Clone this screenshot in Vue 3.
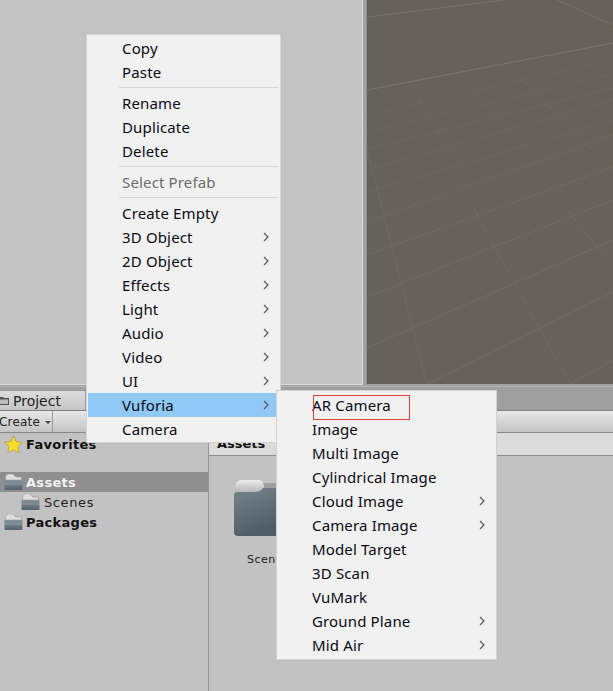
<template>
  <div class="editor">
    <div class="top">
      <div class="hierarchy"></div>
      <div class="scene">
        <svg class="grid" viewBox="367 0 246 384" preserveAspectRatio="none">
          <line v-for="(l, i) in gridLines" :key="i" :x1="l[0]" :y1="l[1]" :x2="l[2]" :y2="l[3]" :stroke-opacity="l[4]" stroke="#9a9690" stroke-width="1" />
        </svg>
      </div>
    </div>

    <div class="bottom">
      <div class="tabbar">
        <div class="tab">
          <svg class="tab-icon" viewBox="0 0 10 10"><path d="M-2 1h5l1 1h5v7h-11z" fill="#555" /><path d="M-1 3.5h9v4.5h-9z" fill="#bdbdbd" /></svg>
          <span>Project</span>
        </div>
      </div>
      <div class="toolbar">
        <div class="create">Create <i class="caret"></i></div>
      </div>
      <div class="panes">
        <div class="tree">
          <div class="row bold fav">
            <svg class="star" viewBox="0 0 20 20"><path d="M10 .8l2.8 6 6.6.8-4.8 4.5 1.3 6.6L10 15.5l-5.9 3.2 1.3-6.6L.6 7.6l6.6-.8z" fill="#f8dc2c" stroke="#b09c50" stroke-width="0.8" /></svg>
            <span>Favorites</span>
          </div>
          <div class="row bold selected">
            <svg class="mini"><use href="#mini-folder" /></svg>
            <span>Assets</span>
          </div>
          <div class="row child">
            <svg class="mini"><use href="#mini-folder" /></svg>
            <span>Scenes</span>
          </div>
          <div class="row bold">
            <svg class="mini"><use href="#mini-folder" /></svg>
            <span>Packages</span>
          </div>
        </div>
        <div class="files">
          <div class="crumb"><span>Assets</span></div>
          <div class="file">
            <svg class="big-folder" viewBox="0 0 42 56">
              <defs>
                <linearGradient id="tabfill" x1="0" y1="0" x2="0" y2="1"><stop offset="0" stop-color="#ececec" /><stop offset="1" stop-color="#b4b4b4" /></linearGradient>
                <linearGradient id="bodyfill" x1="0" y1="0" x2="0.3" y2="1"><stop offset="0" stop-color="#76858d" /><stop offset="1" stop-color="#4f5e66" /></linearGradient>
              </defs>
              <path d="M27 3h15v6H27z" fill="#a0a0a0" />
              <path d="M1 9q0-9 7-9h17q4 0 5 6v7H1z" fill="url(#tabfill)" />
              <path d="M0 15q0-3 3-3h18q5 0 8-4h13v48H4q-4 0-4-4z" fill="url(#bodyfill)" />
            </svg>
            <div class="file-name">Scenes</div>
          </div>
        </div>
      </div>
    </div>

    <svg width="0" height="0" class="defs">
      <defs>
        <linearGradient id="minibody" x1="0" y1="0" x2="0" y2="1"><stop offset="0" stop-color="#84929a" /><stop offset="1" stop-color="#55636a" /></linearGradient>
      </defs>
      <symbol id="mini-folder" viewBox="0 0 18 16">
        <path d="M1 5q0-5 3-5h4q2 0 3 3h6v3H1z" fill="#dedede" stroke="#8a8a8a" stroke-width="0.5" />
        <path d="M0 6h18v9q0 1-1 1H1q-1 0-1-1z" fill="url(#minibody)" />
        <path d="M0 9.5h18v1H0z" fill="#b4bec2" opacity="0.5" />
      </symbol>
    </svg>

    <ul class="menu main-menu">
      <template v-for="(item, i) in mainMenu" :key="i">
        <li v-if="item.sep" class="sep"></li>
        <li v-else class="item" :class="{ disabled: item.disabled, active: item.active }">
          <span>{{ item.label }}</span>
          <svg v-if="item.sub" class="arrow" viewBox="0 0 6 10"><path d="M1 1l4 4-4 4" fill="none" stroke="#555" stroke-width="1.1" /></svg>
        </li>
      </template>
    </ul>

    <ul class="menu sub-menu">
      <li v-for="item in vuforiaMenu" :key="item.label" class="item">
        <span>{{ item.label }}</span>
        <svg v-if="item.sub" class="arrow" viewBox="0 0 6 10"><path d="M1 1l4 4-4 4" fill="none" stroke="#555" stroke-width="1.1" /></svg>
      </li>
    </ul>
    <div class="red-box"></div>
  </div>
</template>

<script setup>
const mainMenu = [
  { label: 'Copy' },
  { label: 'Paste' },
  { sep: true },
  { label: 'Rename' },
  { label: 'Duplicate' },
  { label: 'Delete' },
  { sep: true },
  { label: 'Select Prefab', disabled: true },
  { sep: true },
  { label: 'Create Empty' },
  { label: '3D Object', sub: true },
  { label: '2D Object', sub: true },
  { label: 'Effects', sub: true },
  { label: 'Light', sub: true },
  { label: 'Audio', sub: true },
  { label: 'Video', sub: true },
  { label: 'UI', sub: true },
  { label: 'Vuforia', sub: true, active: true },
  { label: 'Camera' }
]

const vuforiaMenu = [
  { label: 'AR Camera' },
  { label: 'Image' },
  { label: 'Multi Image' },
  { label: 'Cylindrical Image' },
  { label: 'Cloud Image', sub: true },
  { label: 'Camera Image', sub: true },
  { label: 'Model Target' },
  { label: '3D Scan' },
  { label: 'VuMark' },
  { label: 'Ground Plane', sub: true },
  { label: 'Mid Air', sub: true }
]

// scene grid, page coordinates
const gridLines = [
  [367, 17, 503, 0, 0.3],
  [367, 90, 613, 43, 0.35],
  [557, 0, 613, 25, 0.3],
  [367, 115, 613, 60, 0.1],
  [367, 132, 613, 74, 0.1],
  [367, 149, 613, 88, 0.12],
  [373, 168, 613, 100, 0.12],
  [368, 192, 613, 120, 0.12],
  [367, 222, 613, 135, 0.15],
  [367, 255, 613, 167, 0.17],
  [367, 297, 613, 200, 0.18],
  [367, 348, 613, 240, 0.2],
  [427, 384, 613, 292, 0.2],
  [570, 384, 613, 360, 0.2],
  [380, 33, 479, 200, 0.1],
  [437, 50, 569, 200, 0.1],
  [500, 57, 613, 170, 0.1],
  [367, 150, 380, 200, 0.14],
  [380, 200, 427, 384, 0.17],
  [469, 200, 570, 384, 0.17],
  [558, 200, 613, 265, 0.17]
]
</script>

<style>
html, body {
  margin: 0;
  background: #c2c2c2;
}
</style>

<style scoped>
.editor {
  position: relative;
  width: 613px;
  height: 691px;
  overflow: hidden;
  display: flex;
  flex-direction: column;
  background: #c2c2c2;
  font-family: "DejaVu Sans", sans-serif;
  color: #111;
}

.defs {
  position: absolute;
}

.top {
  height: 387px;
  display: flex;
  gap: 3px;
  background: #a2a2a2;
  border-bottom: 1px solid #b4b4b4;
  box-sizing: border-box;
}

.hierarchy {
  width: 363px;
  height: 385px;
  box-sizing: border-box;
  background: #c3c3c3;
  border-right: 1px solid #dcdcdc;
  border-bottom: 1px solid #dcdcdc;
}

.scene {
  flex: 1;
  height: 384px;
  background: #68615b;
  border-left: 1px solid #8c8c8c;
}

.grid {
  display: block;
  width: 100%;
  height: 100%;
}

.bottom {
  flex: 1;
  display: flex;
  flex-direction: column;
  min-height: 0;
}

.tabbar {
  height: 24px;
  box-sizing: border-box;
  padding-top: 4px;
  background: #a0a0a0;
  border-bottom: 1px solid #808080;
}

.tab {
  width: 85px;
  height: 19px;
  display: flex;
  align-items: center;
  gap: 3px;
  background: linear-gradient(#dcdcdc, #c6c6c6);
  box-sizing: border-box;
  font-size: 14px;
  color: #222;
}

.tab-icon {
  width: 10px;
  height: 10px;
}

.toolbar {
  height: 22px;
  box-sizing: border-box;
  background: linear-gradient(#e8e8e8, #c4c4c4);
  border-bottom: 1px solid #8a8a8a;
}

.create {
  width: 54px;
  height: 21px;
  box-sizing: border-box;
  margin-left: -1px;
  border-right: 1px solid #9a9a9a;
  font-size: 12px;
  line-height: 23px;
  letter-spacing: 0.2px;
  white-space: nowrap;
  color: #222;
}

.caret {
  display: inline-block;
  margin-left: 1px;
  vertical-align: 2px;
  border-left: 3px solid transparent;
  border-right: 3px solid transparent;
  border-top: 3px solid #444;
}

.panes {
  flex: 1;
  display: flex;
  min-height: 0;
}

.tree {
  width: 209px;
  box-sizing: border-box;
  border-right: 1px solid #959595;
  display: flex;
  flex-direction: column;
}

.row {
  height: 20px;
  display: flex;
  align-items: center;
  gap: 3px;
  padding-left: 4px;
  font-size: 13px;
  color: #222;
  letter-spacing: 0.3px;
}

.row.bold {
  font-weight: 700;
  color: #111;
}

.row.fav {
  height: 22px;
  margin-bottom: 17px;
}

.row.selected {
  background: #8f8f8f;
  color: #f2f2f2;
}

.row.child {
  padding-left: 21px;
  gap: 4px;
  letter-spacing: 0.6px;
}

.star {
  width: 19px;
  height: 19px;
}

.mini {
  width: 19px;
  height: 16px;
}

.files {
  flex: 1;
  display: flex;
  flex-direction: column;
  min-width: 0;
}

.crumb {
  height: 23px;
  box-sizing: border-box;
  padding-left: 8px;
  background: #dcdcdc;
  border-bottom: 1px solid #8e8e8e;
  font-size: 13px;
  font-weight: 700;
  line-height: 22px;
}

.file {
  padding: 24px 0 0 25px;
}

.big-folder {
  display: block;
  width: 42px;
  height: 56px;
}

.file-name {
  margin-top: 17px;
  margin-left: 13px;
  font-size: 11px;
  letter-spacing: 0.5px;
  color: #222;
}

.menu {
  position: absolute;
  margin: 0;
  list-style: none;
  box-sizing: border-box;
  background: #f1f1f1;
  border: 1px solid #d4d4d4;
  box-shadow: 0 0 1px rgba(0, 0, 0, 0.08);
  font-family: "Noto Sans", sans-serif;
  font-size: 15px;
  letter-spacing: 0.15px;
  color: #0a0a14;
}

.main-menu {
  left: 86px;
  top: 34px;
  width: 195px;
  height: 409px;
  padding: 1px;
}

.sub-menu {
  left: 276px;
  top: 390px;
  width: 221px;
  height: 270px;
  padding: 2px;
}

.item {
  position: relative;
  height: 24px;
  line-height: 24px;
  padding-left: 33px;
}

.main-menu .item {
  padding-left: 34px;
}

.item.disabled {
  color: #6d6d6d;
}

.item.active {
  background: #90c8f6;
}

.sep {
  height: 1px;
  margin: 3px 1px 3px 31px;
  background: #d7d7d7;
}

.arrow {
  position: absolute;
  right: 9px;
  top: 7px;
  width: 6px;
  height: 10px;
}

.main-menu .arrow {
  right: 10px;
}

.red-box {
  position: absolute;
  left: 313px;
  top: 395px;
  width: 97px;
  height: 25px;
  box-sizing: border-box;
  border: 1px solid #d9403a;
}
</style>
